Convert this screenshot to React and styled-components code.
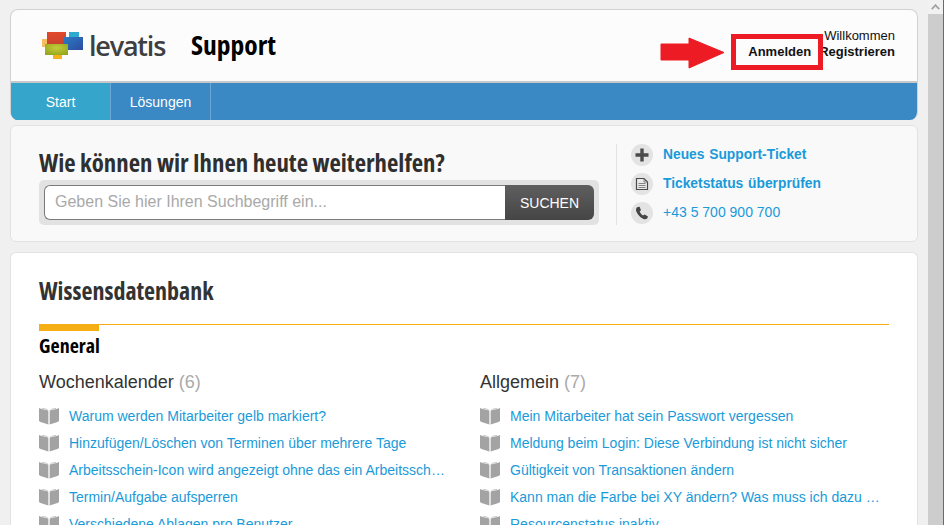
import React from 'react';
import styled, { createGlobalStyle } from 'styled-components';

const GlobalStyle = createGlobalStyle`
  html, body {
    margin: 0;
    padding: 0;
    height: 525px;
    overflow: hidden;
    background: #f0f0f0;
    font-family: "Liberation Sans", Arial, sans-serif;
  }
`;

const heading = `
  font-family: "Open Sans", "Liberation Sans", sans-serif;
  font-stretch: 75%;
  font-weight: 700;
  margin: 0;
`;

const Window = styled.div`
  position: relative;
  display: flex;
  width: 944px;
  height: 525px;
  overflow: hidden;
`;

const Page = styled.div`
  width: 928px;
  height: 525px;
  flex: none;
  box-sizing: border-box;
  padding: 9px 10px 0 10px;
  display: flex;
  flex-direction: column;
`;

const Scrollbar = styled.div`
  flex: 1;
  display: flex;
  flex-direction: column;
  align-items: center;
  border-right: 1px solid #6a6a6a;
`;

const ScrollArrow = styled.div`
  height: 14px;
  width: 100%;
  display: flex;
  align-items: center;
  justify-content: center;
  background: #f1f1f1;
`;

const ScrollThumb = styled.div`
  flex: 1;
  width: 100%;
  background: #cdcdcd;
`;

const HeaderCard = styled.header`
  flex: none;
  border: 1px solid #d2d2d2;
  border-bottom: none;
  border-radius: 8px;
  overflow: hidden;
  background: #fcfcfc;
`;

const TopRow = styled.div`
  height: 73px;
  box-sizing: border-box;
  display: flex;
  align-items: center;
  padding: 0 22px 0 31px;
  border-bottom: 2px solid #c8c8c8;
`;

const Logo = styled.div`
  display: flex;
  align-items: center;
  gap: 5px;
  width: 149px;
`;

const LogoWord = styled.span`
  font-family: "Open Sans", sans-serif;
  font-size: 27px;
  font-weight: 600;
  letter-spacing: -1.2px;
  line-height: 30px;
  color: #3d3f42;
`;

const SiteTitle = styled.h1`
  ${heading}
  font-size: 27.5px;
  color: #000;
  line-height: 1;
  margin-top: -1px;
`;

const UserBox = styled.div`
  margin-left: auto;
  display: flex;
  flex-direction: column;
  align-items: flex-end;
  font-size: 13px;
  line-height: 16px;
  color: #111;
  margin-top: -3px;
`;

const UserLinks = styled.div`
  display: flex;
  gap: 8px;
  font-weight: 700;
`;

const Nav = styled.nav`
  display: flex;
  height: 37px;
  background: #3a88c4;
`;

const Tab = styled.a`
  width: 100px;
  display: flex;
  align-items: center;
  justify-content: center;
  box-sizing: border-box;
  font-size: 14px;
  color: #fff;
  background: ${p => (p.$active ? '#35a5cb' : 'transparent')};
  border-right: 1px solid #6aa7d6;
`;

const SearchCard = styled.section`
  flex: none;
  margin-top: 5px;
  height: 117px;
  box-sizing: border-box;
  border: 1px solid #e2e2e2;
  border-radius: 6px;
  background: #f9f9f9;
  display: flex;
  padding: 18px 0 0 28px;
`;

const SearchColumn = styled.div`
  width: 560px;
`;

const SearchTitle = styled.h2`
  ${heading}
  font-size: 24.8px;
  padding: 2px 0;
  line-height: 32px;
  color: #2f2f2f;
`;

const SearchForm = styled.div`
  display: flex;
  height: 35px;
  padding: 5px;
  background: #e2e2e2;
  border-radius: 5px;
`;

const SearchInput = styled.div`
  flex: 1;
  box-sizing: border-box;
  background: #fff;
  border: 1px solid #7a7a7a;
  border-right: none;
  border-radius: 6px 0 0 6px;
  padding-left: 10px;
  font-size: 16px;
  line-height: 32px;
  color: #a9a9a9;
`;

const SearchButton = styled.div`
  width: 89px;
  display: flex;
  align-items: center;
  justify-content: center;
  font-size: 14px;
  color: #fff;
  background: linear-gradient(#5f5f5f, #454545);
  border-radius: 0 6px 6px 0;
`;

const Actions = styled.div`
  margin: 0 0 0 17px;
  height: 81px;
  box-sizing: border-box;
  border-left: 1px solid #e2e2e2;
  padding: 0 0 0 14px;
  display: flex;
  flex-direction: column;
  gap: 7px;
`;

const Action = styled.div`
  display: flex;
  align-items: center;
  gap: 10px;
  height: 22px;
  font-size: ${p => (p.$bold ? '13.8px' : '14px')};
  color: #1a9ad9;
  font-weight: ${p => (p.$bold ? 700 : 400)};
  word-spacing: ${p => (p.$bold ? '1px' : '0')};
`;

const ActionLabel = styled.span`
  padding-bottom: 2px;
`;

const ActionIcon = styled.span`
  width: 22px;
  height: 22px;
  border-radius: 50%;
  background: #e3e3e3;
  display: flex;
  align-items: center;
  justify-content: center;
  flex: none;
`;

const KbCard = styled.section`
  margin-top: 10px;
  flex: 1;
  min-height: 0;
  overflow: hidden;
  border: 1px solid #e2e2e2;
  border-bottom: none;
  border-radius: 6px 6px 0 0;
  background: #fff;
  padding: 22px 28px 0 28px;
`;

const KbTitle = styled.h2`
  ${heading}
  font-size: 24px;
  line-height: 32px;
  color: #333;
`;

const Rule = styled.div`
  margin-top: 17px;
  height: 1px;
  background: #f5ae14;
  position: relative;

  &::before {
    content: '';
    position: absolute;
    left: 0;
    top: 0;
    width: 60px;
    height: 7px;
    background: #f5ae14;
  }
`;

const SectionTitle = styled.h3`
  ${heading}
  margin-top: 9px;
  font-size: 20px;
  line-height: 24px;
  color: #000;
`;

const Columns = styled.div`
  margin-top: 12px;
  display: grid;
  grid-template-columns: 406px 401px;
  column-gap: 35px;
`;

const ColumnTitle = styled.h4`
  margin: 0 0 8px;
  font-size: 18px;
  line-height: 24px;
  font-weight: 400;
  color: #333;

  span {
    color: #aaa;
  }
`;

const Article = styled.div`
  display: flex;
  align-items: center;
  height: 27px;
  gap: 10px;
`;

const ArticleLink = styled.a`
  flex: 1;
  min-width: 0;
  font-size: 14px;
  color: #1a9ad9;
  white-space: nowrap;
  overflow: hidden;
  text-overflow: ellipsis;
`;

const LoginHighlight = styled.div`
  position: absolute;
  left: 731px;
  top: 34px;
  width: 92px;
  height: 36px;
  box-sizing: border-box;
  border: 5px solid #ed1c24;
`;

const ArrowMark = styled.svg`
  position: absolute;
  left: 660px;
  top: 37px;
`;

const BookIcon = () => (
  <svg width="20" height="18" viewBox="0 0 20 18" style={{ flex: 'none' }}>
    <path d="M0 1 L2.5 2 L9.4 3.6 V17.5 L1.5 15 L0 14 Z" fill="#a3a3a3" />
    <path d="M20 1 L17.5 2 L10.6 3.6 V17.5 L18.5 15 L20 14 Z" fill="#a3a3a3" />
    <path d="M3 1 Q7 1 9.5 3 L3 2 Z M17 1 Q13 1 10.5 3 L17 2 Z" fill="#c4c4c4" />
    <path d="M9 4.5 H11 M10 4.5 V16" stroke="#e6e6e6" strokeWidth="0.8" fill="none" />
  </svg>
);

const LevatisMark = () => (
  <svg width="42" height="29" viewBox="0 0 42 29">
    <defs>
      <linearGradient id="markRed" x1="0" y1="0" x2="0" y2="1">
        <stop offset="0" stopColor="#e2492c" />
        <stop offset="1" stopColor="#c9432f" />
      </linearGradient>
      <linearGradient id="markBlue" x1="0" y1="0" x2="1" y2="1">
        <stop offset="0" stopColor="#2a7fc4" />
        <stop offset="1" stopColor="#2f4aa0" />
      </linearGradient>
      <radialGradient id="markGreen" cx="0.5" cy="0.35" r="0.7">
        <stop offset="0" stopColor="#c4cc3a" />
        <stop offset="1" stopColor="#93a61d" />
      </radialGradient>
    </defs>
    <rect x="27" y="1" width="10" height="6" fill="#2ea9cf" />
    <rect x="0" y="8" width="11" height="8" fill="#f6bd63" />
    <rect x="5" y="1" width="19" height="13" fill="url(#markRed)" />
    <rect x="21" y="6" width="20" height="13" fill="url(#markBlue)" />
    <rect x="11" y="23" width="9" height="5" fill="#f5b01e" />
    <rect x="3" y="13" width="23" height="11" fill="url(#markGreen)" />
  </svg>
);

const col1 = [
  'Warum werden Mitarbeiter gelb markiert?',
  'Hinzufügen/Löschen von Terminen über mehrere Tage',
  'Arbeitsschein-Icon wird angezeigt ohne das ein Arbeitsschein erstellt wurde',
  'Termin/Aufgabe aufsperren',
  'Verschiedene Ablagen pro Benutzer',
];

const col2 = [
  'Mein Mitarbeiter hat sein Passwort vergessen',
  'Meldung beim Login: Diese Verbindung ist nicht sicher',
  'Gültigkeit von Transaktionen ändern',
  'Kann man die Farbe bei XY ändern? Was muss ich dazu alles beachten',
  'Resourcenstatus inaktiv',
];

function ArticleColumn({ title, count, items }) {
  return (
    <div>
      <ColumnTitle>
        {title} <span>({count})</span>
      </ColumnTitle>
      {items.map(text => (
        <Article key={text}>
          <BookIcon />
          <ArticleLink>{text}</ArticleLink>
        </Article>
      ))}
    </div>
  );
}

export default function App() {
  return (
    <Window>
      <GlobalStyle />
      <Page>
        <HeaderCard>
          <TopRow>
            <Logo>
              <LevatisMark />
              <LogoWord>levatis</LogoWord>
            </Logo>
            <SiteTitle>Support</SiteTitle>
            <UserBox>
              <span>Willkommen</span>
              <UserLinks>
                <span>Anmelden</span>
                <span>Registrieren</span>
              </UserLinks>
            </UserBox>
          </TopRow>
          <Nav>
            <Tab $active>Start</Tab>
            <Tab>Lösungen</Tab>
          </Nav>
        </HeaderCard>

        <SearchCard>
          <SearchColumn>
            <SearchTitle>Wie können wir Ihnen heute weiterhelfen?</SearchTitle>
            <SearchForm>
              <SearchInput>Geben Sie hier Ihren Suchbegriff ein...</SearchInput>
              <SearchButton>SUCHEN</SearchButton>
            </SearchForm>
          </SearchColumn>
          <Actions>
            <Action $bold>
              <ActionIcon>
                <svg width="16" height="16" viewBox="0 0 16 16">
                  <path d="M8 1.5v13M1.5 8h13" stroke="#4a4a4a" strokeWidth="3.4" />
                </svg>
              </ActionIcon>
              <ActionLabel>Neues Support-Ticket</ActionLabel>
            </Action>
            <Action $bold>
              <ActionIcon>
                <svg width="14" height="14" viewBox="0 0 14 14">
                  <path d="M1.5 1.5h7.5l3.5 3.5v7.5h-11z" fill="#e9e9e9" stroke="#4a4a4a" strokeWidth="1.2" />
                  <path d="M9 1.5v3.5h3.5M3.5 6.5h7M3.5 8.5h7M3.5 10.5h7" stroke="#777" strokeWidth="0.9" fill="none" />
                </svg>
              </ActionIcon>
              <ActionLabel>Ticketstatus überprüfen</ActionLabel>
            </Action>
            <Action>
              <ActionIcon>
                <svg width="14" height="14" viewBox="0 0 14 14">
                  <path d="M2 1.2 L4.6 0.8 L6 4.2 L4.6 5.6 Q5.6 8 8 9.6 L9.6 8.4 L13 10.4 L12.2 12.6 Q10.6 14 8 12.8 Q2.6 9.6 1 4.4 Q0.8 2.4 2 1.2 Z" fill="#444" />
                </svg>
              </ActionIcon>
              <ActionLabel>+43 5 700 900 700</ActionLabel>
            </Action>
          </Actions>
        </SearchCard>

        <KbCard>
          <KbTitle>Wissensdatenbank</KbTitle>
          <Rule />
          <SectionTitle>General</SectionTitle>
          <Columns>
            <ArticleColumn title="Wochenkalender" count={6} items={col1} />
            <ArticleColumn title="Allgemein" count={7} items={col2} />
          </Columns>
        </KbCard>
      </Page>

      <Scrollbar>
        <ScrollArrow>
          <svg width="9" height="6" viewBox="0 0 9 6">
            <path d="M0.8 5.2 L4.5 1.2 L8.2 5.2" stroke="#a3a3a3" strokeWidth="1.8" fill="none" />
          </svg>
        </ScrollArrow>
        <ScrollThumb />
      </Scrollbar>

      <ArrowMark width="64" height="32" viewBox="0 0 64 32">
        <path d="M1 7 H29 V1 L64 15.5 L29 31 V23 H1 Z" fill="#ed1c24" stroke="#ed1c24" strokeLinejoin="round" />
      </ArrowMark>
      <LoginHighlight />
    </Window>
  );
}
